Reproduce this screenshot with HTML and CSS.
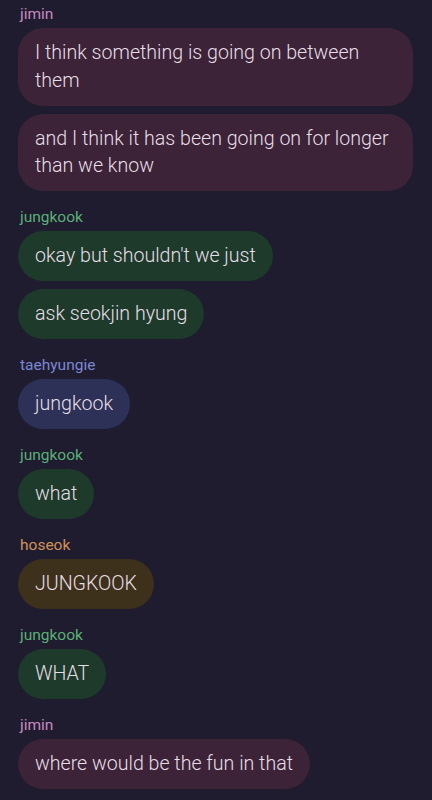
FILE: index.html
```html
<!DOCTYPE html>
<html>
<head>
<meta charset="utf-8">
<link rel="stylesheet" href="styles.css">
</head>
<body>
<div class="chat">
  <div class="group jimin">
    <div class="name">jimin</div>
    <div class="bubble">I think something is going on between them</div>
    <div class="bubble">and I think it has been going on for longer than we know</div>
  </div>
  <div class="group jk">
    <div class="name">jungkook</div>
    <div class="bubble">okay but shouldn't we just</div>
    <div class="bubble">ask seokjin hyung</div>
  </div>
  <div class="group tae">
    <div class="name">taehyungie</div>
    <div class="bubble">jungkook</div>
  </div>
  <div class="group jk">
    <div class="name">jungkook</div>
    <div class="bubble">what</div>
  </div>
  <div class="group hoseok">
    <div class="name">hoseok</div>
    <div class="bubble">JUNGKOOK</div>
  </div>
  <div class="group jk">
    <div class="name">jungkook</div>
    <div class="bubble">WHAT</div>
  </div>
  <div class="group jimin">
    <div class="name">jimin</div>
    <div class="bubble">where would be the fun in that</div>
  </div>
</div>
</body>
</html>
```

FILE: styles.css
```css
html, body {
  margin: 0;
  padding: 0;
  background: #1e1c2e;
  height: 100%;
  overflow: hidden;
}
body {
  font-family: Roboto, "Liberation Sans", sans-serif;
  color: #e6dfe6;
}
.chat {
  display: flex;
  flex-direction: column;
  gap: 16px;
  padding: 4px 19px 0 18px;
}
.group {
  display: flex;
  flex-direction: column;
  align-items: flex-start;
  gap: 8px;
}
.name {
  font-size: 15.5px;
  line-height: 20px;
  padding-left: 2px;
  margin-bottom: -4px;
}
.bubble {
  font-size: 19.6px;
  font-weight: 300;
  line-height: 27.5px;
  padding: 11.25px 17px;
  border-radius: 25px;
  max-width: 100%;
  box-sizing: border-box;
}
.jimin .name { color: #c68ac1; }
.jimin .bubble { background: #3d2338; }
.jk .name { color: #5cae78; }
.jk .bubble { background: #1d3a2b; }
.tae .name { color: #7d86d6; }
.tae .bubble { background: #2d3158; }
.hoseok .name { color: #d1925a; }
.hoseok .bubble { background: #3e311b; }
```
